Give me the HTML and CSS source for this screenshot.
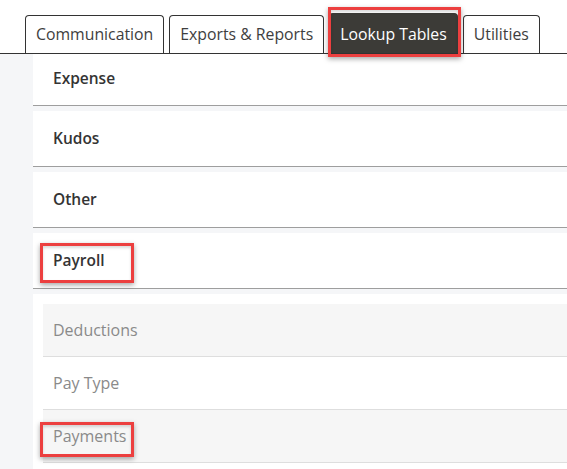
FILE: index.html
```html
<!DOCTYPE html>
<html>
<head>
<meta charset="utf-8">
<link rel="stylesheet" href="styles.css">
</head>
<body>
<div class="page">
  <div class="tabbar">
    <div class="tab">Communication</div>
    <div class="tab">Exports &amp; Reports</div>
    <div class="tab active">Lookup Tables</div>
    <div class="tab">Utilities</div>
  </div>
  <div class="main">
    <div class="side"></div>
    <div class="content">
      <div class="group first">Expense</div>
      <div class="group">Kudos</div>
      <div class="group">Other</div>
      <div class="group">Payroll</div>
      <div class="sub">
        <div class="item odd">Deductions</div>
        <div class="item">Pay Type</div>
        <div class="item odd">Payments</div>
      </div>
    </div>
  </div>
  <div class="mark mark-tab"></div>
  <div class="mark mark-payroll"></div>
  <div class="mark mark-payments"></div>
</div>
</body>
</html>
```
FILE: styles.css
```css
html, body {
  margin: 0;
  padding: 0;
  background: #ffffff;
  font-family: "Open Sans", "Liberation Sans", sans-serif;
}
.page {
  position: relative;
  width: 567px;
  height: 469px;
  overflow: hidden;
}
.tabbar {
  display: flex;
  align-items: flex-end;
  gap: 5px;
  height: 53px;
  padding-left: 25px;
  border-bottom: 1px solid #333333;
  box-sizing: content-box;
}
.tab {
  height: 37px;
  line-height: 37px;
  padding: 0 10px;
  border: 1px solid #333333;
  border-bottom: none;
  border-radius: 4px 4px 0 0;
  font-size: 15.8px;
  color: #3e3e3e;
  background: #ffffff;
  white-space: nowrap;
}
.tab.active {
  background: #3c3b37;
  border-color: #3c3b37;
  color: #ffffff;
  height: 39px;
  line-height: 41px;
}
.main {
  display: flex;
  height: 415px;
}
.side {
  width: 33px;
  flex: none;
  background: #f5f6f8;
}
.content {
  flex: 1;
  background: #f5f6f8;
  display: flex;
  flex-direction: column;
  gap: 5px;
}
.group {
  height: 55px;
  line-height: 55px;
  padding-left: 20px;
  background: #ffffff;
  border-bottom: 1px solid #9e9e9e;
  font-size: 15.5px;
  font-weight: 600;
  color: #343434;
}
.group.first {
  height: 51px;
  line-height: 49px;
}
.sub {
  flex: 1;
  background: #ffffff;
  padding: 10px 0 0 10px;
}
.item {
  height: 52px;
  line-height: 52px;
  padding-left: 10px;
  border-bottom: 1px solid #dedede;
  font-size: 16px;
  color: #8a8a8a;
  background: #ffffff;
}
.item.odd {
  background: #f6f6f6;
}
.mark {
  position: absolute;
  border: 3px solid #ec3f3f;
  box-sizing: border-box;
  box-shadow: 0 2px 5px rgba(0, 0, 0, 0.35), inset 0 2px 3px rgba(0, 0, 0, 0.15);
}
.mark-tab {
  left: 328px;
  top: 7px;
  width: 133px;
  height: 50px;
}
.mark-payroll {
  left: 40px;
  top: 243px;
  width: 94px;
  height: 40px;
}
.mark-payments {
  left: 40px;
  top: 422px;
  width: 94px;
  height: 35px;
}
```
